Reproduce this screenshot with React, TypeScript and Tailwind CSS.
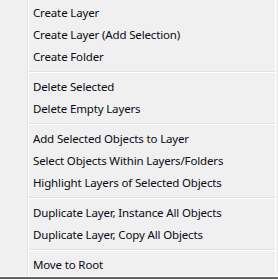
import React from "react";

type Entry = { label: string } | { sep: true };

const entries: Entry[] = [
  { label: "Create Layer" },
  { label: "Create Layer (Add Selection)" },
  { label: "Create Folder" },
  { sep: true },
  { label: "Delete Selected" },
  { label: "Delete Empty Layers" },
  { sep: true },
  { label: "Add Selected Objects to Layer" },
  { label: "Select Objects Within Layers/Folders" },
  { label: "Highlight Layers of Selected Objects" },
  { sep: true },
  { label: "Duplicate Layer, Instance All Objects" },
  { label: "Duplicate Layer, Copy All Objects" },
  { sep: true },
  { label: "Move to Root" },
];

export default function App() {
  return (
    <div
      className="w-[278px] h-[279px] bg-[#f0f0f0] flex flex-col overflow-hidden"
      style={{ fontFamily: '"Segoe UI", "Noto Sans", sans-serif' }}
    >
      <div className="flex flex-1 min-h-0">
        <div className="w-[27px]" />
        <div className="w-px bg-[#e2e3e3]" />
        <div className="w-px bg-white" />
        <div className="flex-1 flex flex-col pt-[2px]">
          {entries.map((e, i) =>
            "sep" in e ? (
              <div key={i} className="h-[8px] flex flex-col justify-center">
                <div className="h-px bg-[#e0e0e0]" />
                <div className="h-px bg-white" />
              </div>
            ) : (
              <div
                key={i}
                className="h-[22px] flex items-center pl-[4px] text-[11.5px] tracking-[-0.15px] text-[#0a0a14] whitespace-nowrap"
              >
                {e.label}
              </div>
            )
          )}
        </div>
        <div className="w-px bg-white" />
        <div className="w-[2px]" />
      </div>
      <div className="h-px bg-white" />
      <div className="h-[2px] bg-[#646464]" />
    </div>
  );
}
